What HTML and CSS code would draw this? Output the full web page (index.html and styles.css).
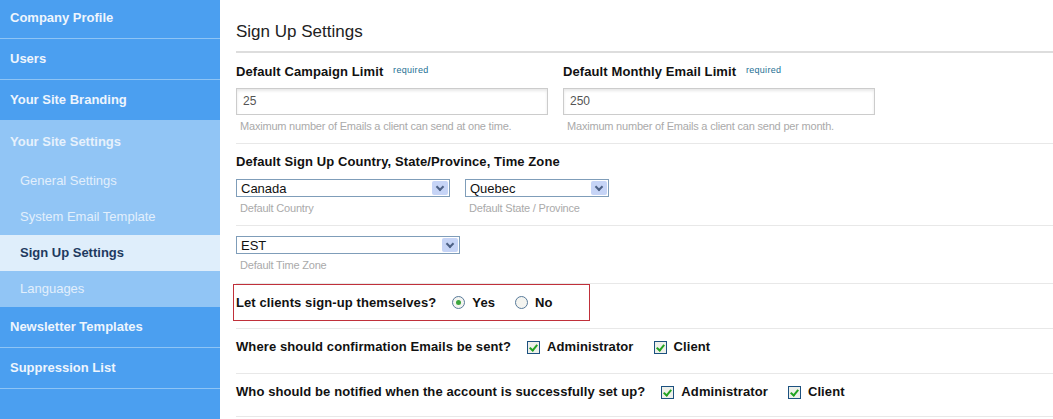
FILE: index.html
```html
<!DOCTYPE html>
<html lang="en">
<head>
  <meta charset="UTF-8" />
  <title>Sign Up Settings</title>
  <link rel="stylesheet" href="styles.css">
</head>
<body>
<div class="sidebar">
  <div class="nav-item">Company Profile</div>
  <div class="nav-item">Users</div>
  <div class="nav-item">Your Site Branding</div>
  <div class="nav-group">
    <div class="group-title">Your Site Settings</div>
    <div class="sub-item">General Settings</div>
    <div class="sub-item">System Email Template</div>
    <div class="sub-item active">Sign Up Settings</div>
    <div class="sub-item">Languages</div>
  </div>
  <div class="nav-item">Newsletter Templates</div>
  <div class="nav-item">Suppression List</div>
</div>

<div class="main">
  <h1>Sign Up Settings</h1>

  <div class="section cols">
    <div class="field">
      <label>Default Campaign Limit <span class="req">required</span></label>
      <div class="input">25</div>
      <div class="help">Maximum number of Emails a client can send at one time.</div>
    </div>
    <div class="field">
      <label>Default Monthly Email Limit <span class="req">required</span></label>
      <div class="input">250</div>
      <div class="help">Maximum number of Emails a client can send per month.</div>
    </div>
  </div>

  <div class="section">
    <label>Default Sign Up Country, State/Province, Time Zone</label>
    <div class="selects">
      <div>
        <div class="select country"><span>Canada</span><span class="arrow"></span></div>
        <div class="help">Default Country</div>
      </div>
      <div>
        <div class="select state"><span>Quebec</span><span class="arrow"></span></div>
        <div class="help">Default State / Province</div>
      </div>
    </div>
  </div>

  <div class="section zone-row">
    <div class="select zone"><span>EST</span><span class="arrow"></span></div>
    <div class="help">Default Time Zone</div>
  </div>

  <div class="section tight">
    <div class="highlight">
      <span class="q">Let clients sign-up themselves?</span>
      <span class="opt"><span class="radio on"></span>Yes</span>
      <span class="opt"><span class="radio"></span>No</span>
    </div>
  </div>

  <div class="section inline">
    <span class="q">Where should confirmation Emails be sent?</span>
    <span class="opt"><span class="check"></span>Administrator</span>
    <span class="opt"><span class="check"></span>Client</span>
  </div>

  <div class="section inline last">
    <span class="q">Who should be notified when the account is successfully set up?</span>
    <span class="opt"><span class="check"></span>Administrator</span>
    <span class="opt"><span class="check"></span>Client</span>
  </div>
</div>
</body>
</html>
```

FILE: styles.css
```css
body {
  margin: 0;
  font-family: "Liberation Sans", Arial, sans-serif;
  background: #fff;
  color: #111;
  display: flex;
  height: 419px;
  overflow: hidden;
}
.sidebar {
  width: 220px;
  flex-shrink: 0;
  background: #4b9ff0;
  margin-top: -2px;
}
.nav-item {
  line-height: 40px;
  padding-left: 10px;
  font-size: 13px;
  font-weight: bold;
  color: #eef5fd;
  border-bottom: 1px solid #8ec4f5;
}
.nav-group {
  background: #91c5f5;
  margin-top: -1px;
}
.group-title {
  line-height: 43px;
  padding-left: 10px;
  font-size: 13px;
  font-weight: bold;
  color: #e6f1fc;
}
.sub-item {
  line-height: 36px;
  padding-left: 20px;
  font-size: 13px;
  color: #e2effc;
}
.sub-item.active {
  background: #dfeefb;
  color: #1e3a5f;
  font-weight: bold;
}
.main {
  flex: 1;
  padding-left: 16px;
}
h1 {
  margin: 0;
  font-size: 17px;
  line-height: 20px;
  font-weight: normal;
  color: #222;
  padding: 22px 0 9px;
  border-bottom: 2px solid #ddd;
}
.section {
  padding: 10px 0 11px;
  border-bottom: 1px solid #e8e8e8;
}
.cols {
  display: flex;
  gap: 15px;
  padding-top: 11px;
}
.zone-row {
  padding-bottom: 12px;
}
label, .q, .opt {
  font-size: 13px;
  font-weight: bold;
  letter-spacing: 0.1px;
  line-height: 16px;
}
label {
  display: block;
}
.req {
  font-size: 9px;
  line-height: 0;
  font-weight: normal;
  letter-spacing: 0.3px;
  color: #1d6f94;
  margin-left: 6px;
  vertical-align: 3px;
}
.input {
  width: 304px;
  height: 25px;
  margin-top: 8px;
  border: 1px solid #ccc;
  box-shadow: inset 0 2px 3px #e8e8e8;
  font-size: 12px;
  line-height: 25px;
  color: #555;
  padding-left: 6px;
}
.help {
  font-size: 11px;
  letter-spacing: -0.2px;
  color: #aaa;
  line-height: 12px;
  margin-top: 5px;
  padding-left: 4px;
}
.selects {
  display: flex;
  gap: 15px;
  margin-top: 9px;
}
.select {
  display: flex;
  justify-content: space-between;
  align-items: center;
  height: 16px;
  border: 1px solid #7f9db9;
  font-size: 13px;
  padding: 0 1px 0 4px;
}
.select.country { width: 207px; }
.select.state { width: 137px; }
.select.zone { width: 217px; }
.arrow {
  width: 16px;
  height: 14px;
  background: #c6d4f6;
  border-radius: 2px;
  position: relative;
}
.arrow::after {
  content: "";
  position: absolute;
  left: 5px;
  top: 3px;
  width: 4px;
  height: 4px;
  border-right: 2px solid #4d6185;
  border-bottom: 2px solid #4d6185;
  transform: rotate(45deg);
}
.tight {
  padding: 0 0 7px;
}
.highlight {
  margin-left: -3px;
  width: 353px;
  height: 35px;
  border: 1px solid #c0303a;
  display: flex;
  align-items: center;
  padding-left: 2px;
}
.opt {
  display: inline-flex;
  align-items: center;
  gap: 7px;
  margin-left: 16px;
}
.highlight .opt + .opt { margin-left: 20px; }
.radio {
  width: 11px;
  height: 11px;
  border: 1px solid #587a9a;
  border-radius: 50%;
  background: #f4f4f0;
  position: relative;
}
.radio.on::after {
  content: "";
  position: absolute;
  left: 3px;
  top: 3px;
  width: 5px;
  height: 5px;
  border-radius: 50%;
  background: #3ca53c;
}
.inline {
  padding: 10px 0 18px;
  display: flex;
  align-items: center;
}
.inline.last { padding-bottom: 16px; }
.inline .opt { margin-left: 16px; }
.inline .opt + .opt { margin-left: 20px; }
.check {
  width: 11px;
  height: 11px;
  border: 1px solid #1c5180;
  background: #eef0ea;
  position: relative;
}
.check::after {
  content: "";
  position: absolute;
  left: 3px;
  top: 1px;
  width: 3px;
  height: 6px;
  border-right: 2px solid #22a322;
  border-bottom: 2px solid #22a322;
  transform: rotate(40deg);
}
```
